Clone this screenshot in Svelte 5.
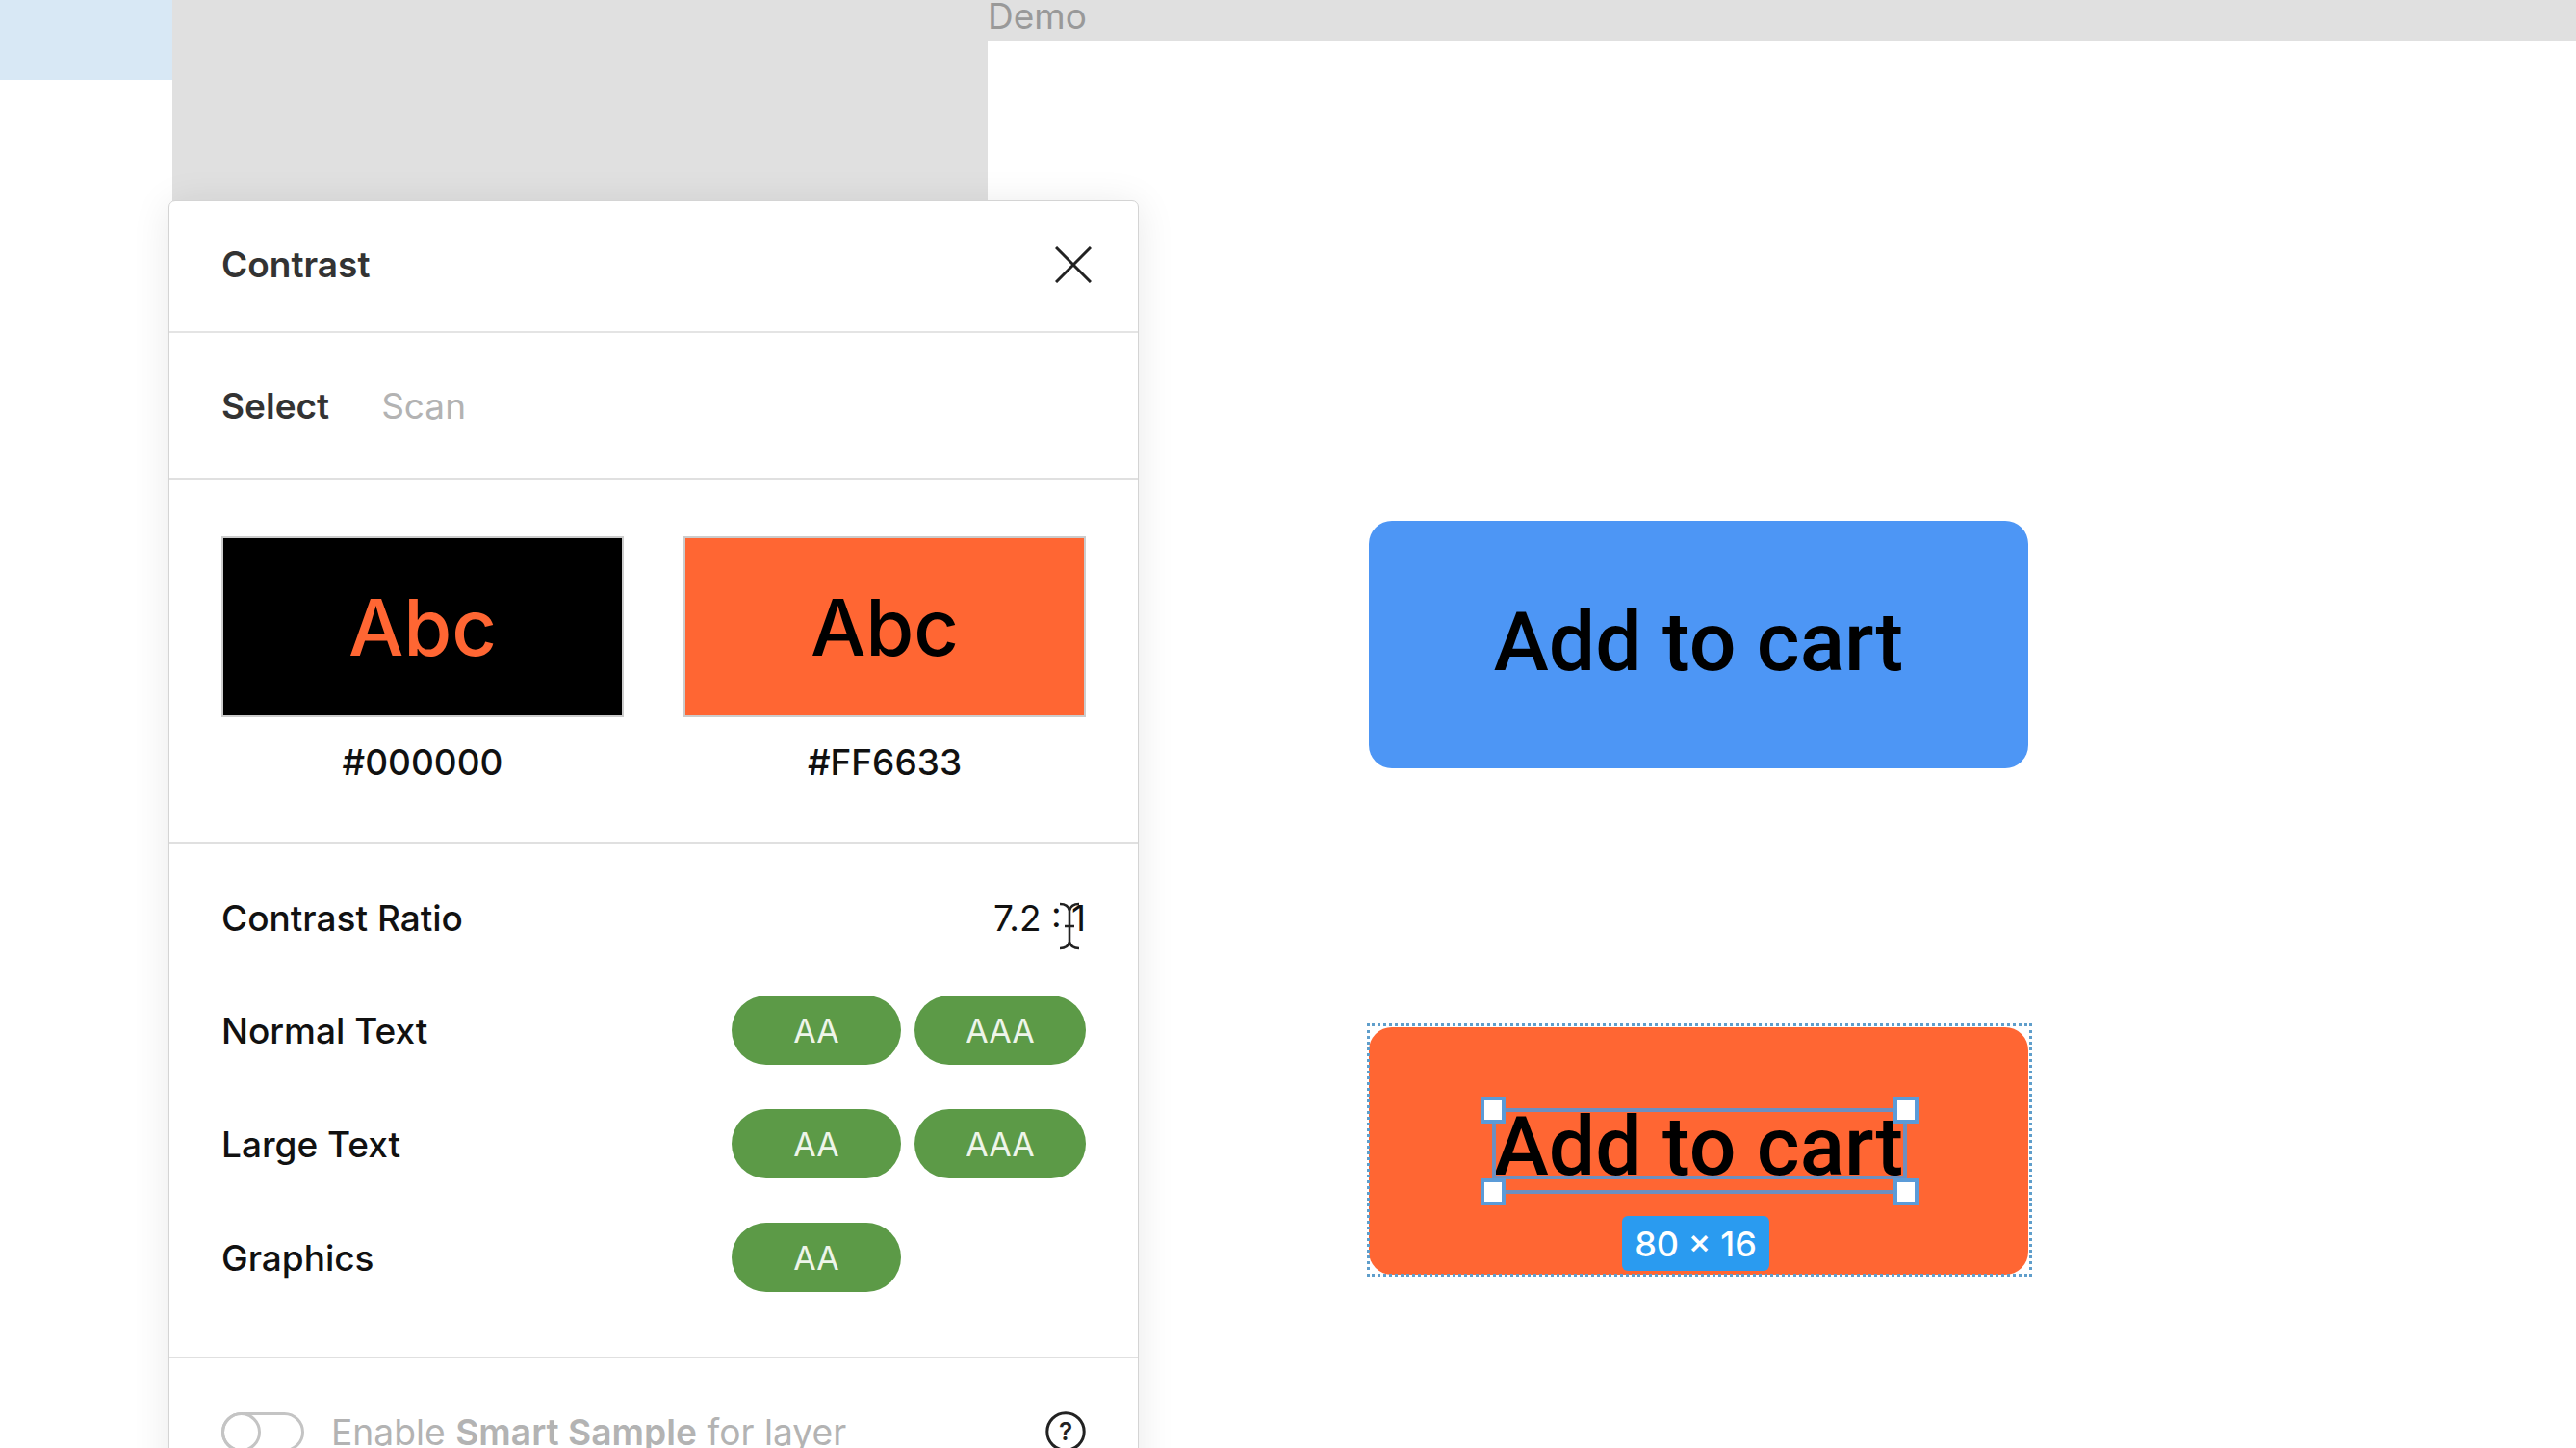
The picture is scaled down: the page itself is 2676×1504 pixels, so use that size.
<script>
  const swatches = [
    { cls: 'dark', hex: '#000000' },
    { cls: 'light', hex: '#FF6633' }
  ];
  const rows = [
    { label: 'Normal Text', pills: ['AA', 'AAA'] },
    { label: 'Large Text', pills: ['AA', 'AAA'] },
    { label: 'Graphics', pills: ['AA'] }
  ];
</script>

<div class="stage">
  <div class="top">
    <div class="tint"></div>
    <div class="gray"></div>
    <div class="demo"><span>Demo</span></div>
  </div>

  <section class="panel">
    <header class="head">
      <h2>Contrast</h2>
      <svg class="close" viewBox="0 0 38 38" width="38" height="38" aria-hidden="true">
        <path d="M1 1 L37 37 M37 1 L1 37" fill="none" stroke="#222" stroke-width="3" />
      </svg>
    </header>

    <nav class="tabs">
      <span class="on">Select</span>
      <span class="off">Scan</span>
    </nav>

    <div class="swatches">
      {#each swatches as s}
        <div class="swatch">
          <div class="chip {s.cls}">Abc</div>
          <div class="hex">{s.hex}</div>
        </div>
      {/each}
    </div>

    <div class="results">
      <div class="row ratio">
        <span>Contrast Ratio</span>
        <span class="val">7.2 : 1
          <svg class="cursor" viewBox="0 0 24 50" width="24" height="50" aria-hidden="true">
            <path d="M2 2 C7 2 11 4 12 9 C13 4 17 2 22 2 M12 9 V41 M2 48 C7 48 11 46 12 41 C13 46 17 48 22 48 M7 25 H17" fill="none" stroke="#222" stroke-width="2.6" />
          </svg>
        </span>
      </div>
      {#each rows as r}
        <div class="row">
          <span>{r.label}</span>
          <div class="pills">
            {#each r.pills as p}
              <span class="pill" class:wide={p === 'AAA'}>{p}</span>
            {/each}
          </div>
        </div>
      {/each}
    </div>

    <footer class="foot">
      <span class="toggle"><i></i></span>
      <span class="note">Enable <b>Smart Sample</b> for layer</span>
      <svg class="help" viewBox="0 0 42 42" width="42" height="42" aria-hidden="true">
        <circle cx="21" cy="21" r="19.2" fill="none" stroke="#222" stroke-width="3" />
        <text x="21" y="30" text-anchor="middle" class="q">?</text>
      </svg>
    </footer>
  </section>

  <div class="btn blue">Add to cart</div>

  <div class="btn orange">Add to cart</div>
  <div class="dash"></div>
  <div class="textbox">
    <div class="base"></div>
    <i class="h tl"></i><i class="h tr"></i><i class="h bl"></i><i class="h br"></i>
  </div>
  <div class="size">80 × 16</div>
</div>

<style>
  :global(body) {
    margin: 0;
    background: #fff;
  }
  .stage {
    position: relative;
    width: 2676px;
    height: 1504px;
    overflow: hidden;
    background: #fff;
    font-family: Inter, "Liberation Sans", sans-serif;
    color: #111;
  }
  .top {
    display: flex;
    align-items: flex-start;
  }
  .tint {
    width: 179px;
    height: 83px;
    background: #d8e8f5;
  }
  .gray {
    width: 847px;
    height: 209px;
    background: #e0e0e0;
  }
  .demo {
    flex: 1;
    height: 43px;
    background: #e0e0e0;
    font-size: 37px;
    line-height: 33px;
    color: #999;
  }
  .panel {
    position: absolute;
    left: 175px;
    top: 208px;
    width: 1008px;
    height: 1340px;
    box-sizing: border-box;
    background: #fff;
    border: 1px solid #d4d4d4;
    border-radius: 7px;
    box-shadow: 0 4px 40px rgba(0, 0, 0, 0.09);
    display: flex;
    flex-direction: column;
  }
  .head {
    height: 137px;
    flex: none;
    box-sizing: border-box;
    padding: 0 48px 3px 54px;
    display: flex;
    align-items: center;
    justify-content: space-between;
    border-bottom: 2px solid #e4e4e4;
  }
  h2 {
    margin: 0 0 2px;
    font-size: 37px;
    font-weight: 600;
    color: #333;
  }
  .tabs {
    height: 153px;
    flex: none;
    box-sizing: border-box;
    padding: 0 54px;
    display: flex;
    align-items: center;
    gap: 54px;
    font-size: 37px;
    border-bottom: 2px solid #e0e0e0;
  }
  .on {
    font-weight: 600;
    color: #333;
  }
  .off {
    color: #b3b3b3;
  }
  .swatches {
    height: 378px;
    flex: none;
    box-sizing: border-box;
    padding: 58px 54px 0;
    display: flex;
    justify-content: space-between;
    border-bottom: 2px solid #e0e0e0;
  }
  .swatch {
    width: 418px;
    text-align: center;
  }
  .chip {
    height: 188px;
    box-sizing: border-box;
    display: flex;
    align-items: center;
    justify-content: center;
    font-size: 81px;
    font-weight: 500;
    border: 2px solid #ccc;
    padding-top: 2px;
  }
  .dark {
    background: #000;
    color: #ff6633;
  }
  .light {
    background: #ff6633;
    color: #000;
  }
  .hex {
    margin-top: 25px;
    font-size: 37px;
    line-height: 44px;
    font-weight: 500;
  }
  .results {
    height: 534px;
    flex: none;
    box-sizing: border-box;
    padding: 18px 54px 0;
    border-bottom: 2px solid #e0e0e0;
  }
  .row {
    height: 118px;
    display: flex;
    align-items: center;
    justify-content: space-between;
    font-size: 37px;
    font-weight: 500;
  }
  .ratio {
    height: 116px;
  }
  .val {
    position: relative;
    font-weight: 400;
  }
  .cursor {
    position: absolute;
    right: 5px;
    top: 6px;
  }
  .pills {
    width: 368px;
    display: flex;
    gap: 14px;
  }
  .pill {
    width: 176px;
    height: 72px;
    border-radius: 36px;
    background: #5c9a47;
    color: #eef5ea;
    display: flex;
    align-items: center;
    justify-content: center;
    font-size: 34px;
    font-weight: 400;
  }
  .pill.wide {
    width: 178px;
  }
  .foot {
    height: 152px;
    flex: none;
    box-sizing: border-box;
    padding: 0 54px;
    display: flex;
    align-items: center;
    font-size: 37.2px;
    color: #b3b3b3;
  }
  .toggle {
    width: 86px;
    height: 41px;
    box-sizing: border-box;
    border: 3px solid #c4c4c4;
    border-radius: 21px;
    position: relative;
    flex: none;
    margin-right: 28px;
  }
  .toggle i {
    position: absolute;
    left: -3px;
    top: -3px;
    width: 41px;
    height: 41px;
    box-sizing: border-box;
    border: 3px solid #c4c4c4;
    border-radius: 50%;
  }
  .note {
    flex: 1;
  }
  .note b {
    font-weight: 600;
  }
  .q {
    font-family: Inter, sans-serif;
    font-size: 26px;
    font-weight: 600;
    fill: #222;
  }
  .btn {
    position: absolute;
    left: 1422px;
    width: 685px;
    height: 257px;
    border-radius: 24px;
    display: flex;
    align-items: center;
    justify-content: center;
    font-family: Roboto, Arial, sans-serif;
    font-size: 86px;
    font-weight: 500;
    color: #000;
  }
  .blue {
    top: 541px;
    background: #4d96f5;
    padding-bottom: 6px;
    box-sizing: border-box;
  }
  .orange {
    top: 1067px;
    background: #ff6633;
    padding-bottom: 10px;
    box-sizing: border-box;
  }
  .dash {
    position: absolute;
    left: 1420px;
    top: 1063px;
    width: 691px;
    height: 263px;
    box-sizing: border-box;
    border: 3px dotted #5f9ecb;
  }
  .textbox {
    position: absolute;
    left: 1550px;
    top: 1151px;
    width: 431px;
    height: 89px;
    box-sizing: border-box;
    border: 4px solid #6d8fc0;
  }
  .base {
    position: absolute;
    left: 0;
    right: 0;
    top: 66px;
    height: 4px;
    background: #6d8fc0;
  }
  .h {
    position: absolute;
    width: 26px;
    height: 28px;
    box-sizing: border-box;
    background: #fff;
    border: 4px solid #5b9bd8;
  }
  .tl { left: -16px; top: -16px; }
  .tr { right: -16px; top: -16px; }
  .bl { left: -16px; bottom: -16px; }
  .br { right: -16px; bottom: -16px; }
  .size {
    position: absolute;
    left: 1685px;
    top: 1263px;
    width: 153px;
    height: 57px;
    border-radius: 6px;
    background: #2a9bf0;
    color: #fff;
    font-size: 36px;
    font-weight: 500;
    display: flex;
    align-items: center;
    justify-content: center;
  }
</style>
